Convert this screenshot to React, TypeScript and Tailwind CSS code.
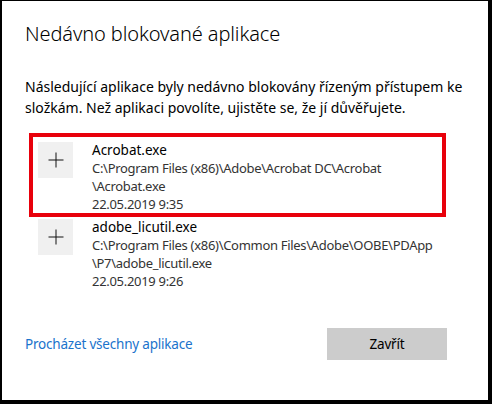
import React from "react";

function Item({ name, path1, path2, date, highlight }: { name: string; path1: string; path2: string; date: string; highlight?: boolean }) {
  return (
    <div className={highlight ? "ml-[4px] w-[417px] h-[84px] border-[4px] border-[#e8000b] pl-[5px] pt-[5px]" : "ml-[4px] w-[417px] pl-[9px] pt-[2px]"}>
      <div className="flex">
        <div className="w-[35px] h-[36px] bg-[#f0f0f0] flex items-center justify-center shrink-0">
          <svg width="16" height="16" viewBox="0 0 16 16">
            <path d="M8 0.5v15M0.5 8h15" stroke="#111" strokeWidth="1" fill="none" />
          </svg>
        </div>
        <div className="ml-[19px] leading-[18px] -mt-[1px] whitespace-nowrap">
          <div className="text-black text-[13.5px]">{name}</div>
          <div className="text-[#333] text-[13px] tracking-[-0.3px]">{path1}</div>
          <div className="text-[#333] text-[13px] tracking-[-0.3px]">{path2}</div>
          <div className="text-[#333] text-[13px] tracking-[-0.3px]">{date}</div>
        </div>
      </div>
    </div>
  );
}

export default function App() {
  return (
    <div
      className="w-[492px] h-[404px] bg-white border-black border-l-[2px] border-t-[1px] border-r-[4px] border-b-[4px] flex flex-col"
      style={{ fontFamily: '"Segoe UI", "Noto Sans", sans-serif' }}
    >
      <div className="pl-[23px] pt-[20px] text-[20px] leading-[26px] text-black font-light tracking-[-0.1px]">Nedávno blokované aplikace</div>
      <div className="pl-[23px] pt-[29px] text-[14px] leading-[21px] text-black">
        Následující aplikace byly nedávno blokovány řízeným přístupem ke složkám. Než aplikaci povolíte, ujistěte se, že jí důvěřujete.
      </div>
      <div className="pl-[23px] pt-[15px]">
        <Item highlight name="Acrobat.exe" path1="C:\Program Files (x86)\Adobe\Acrobat DC\Acrobat" path2="\Acrobat.exe" date="22.05.2019 9:35" />
        <Item name="adobe_licutil.exe" path1="C:\Program Files (x86)\Common Files\Adobe\OOBE\PDApp" path2="\P7\adobe_licutil.exe" date="22.05.2019 9:26" />
      </div>
      <div className="flex items-center justify-between pl-[23px] pr-[41px] mt-auto mb-[40px]">
        <a className="text-[13.5px] tracking-[-0.2px] text-[#1a73cc]">Procházet všechny aplikace</a>
        <button className="w-[120px] h-[32px] bg-[#cccccc] text-[13.5px] tracking-[-0.2px] text-black">Zavřít</button>
      </div>
    </div>
  );
}
